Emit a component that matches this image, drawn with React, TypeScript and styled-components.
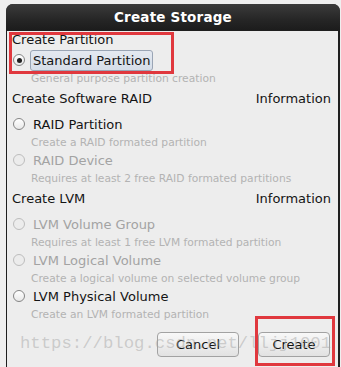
import React from 'react';
import styled, { createGlobalStyle } from 'styled-components';

const Global = createGlobalStyle`
  html, body {
    margin: 0;
    padding: 0;
    background: #efefef;
    overflow: hidden;
  }
  body {
    font-family: 'DejaVu Sans', 'Liberation Sans', sans-serif;
  }
`

const Page = styled.div`
  position: relative;
  width: 341px;
  height: 367px;
  overflow: hidden;
`

const Dialog = styled.div`
  margin: 4px 0 0 6px;
  width: 334px;
  height: 370px;
  display: flex;
  flex-direction: column;
  border-radius: 7px 7px 0 0;
  background: #1f1f1f;
  overflow: hidden;
`

const TitleBar = styled.div`
  height: 26px;
  display: flex;
  align-items: center;
  justify-content: center;
  background: linear-gradient(#3b3b3b, #262626 60%, #1c1c1c);
  color: #ffffff;
  font-weight: 700;
  font-size: 13.5px;
  letter-spacing: 0.2px;
`

const Body = styled.div`
  flex: 1;
  margin: 1px 2px 0 1px;
  background: #ededed;
  padding: 0 7px 0 5px;
  display: flex;
  flex-direction: column;
`

const Heading = styled.div<{ $top: number; $gap: number }>`
  height: 18px;
  line-height: 18px;
  margin-top: ${p => p.$top}px;
  margin-bottom: ${p => p.$gap}px;
  display: flex;
  justify-content: space-between;
  font-size: 13px;
  color: #141414;
`

const Row = styled.div`
  height: 18px;
  display: flex;
  align-items: center;
  padding-left: 1px;
`

const Circle = styled.span<{ $checked?: boolean; $disabled?: boolean }>`
  width: 10px;
  height: 10px;
  border-radius: 50%;
  flex: none;
  border: 1px solid ${p => (p.$disabled ? '#bdbdbd' : '#858585')};
  background: ${p => (p.$disabled ? '#ececec' : 'linear-gradient(#ffffff, #e8e8e8)')};
  display: flex;
  align-items: center;
  justify-content: center;
  &::after {
    content: '';
    width: 5px;
    height: 5px;
    border-radius: 50%;
    background: #202020;
    display: ${p => (p.$checked ? 'block' : 'none')};
  }
`

const Label = styled.span<{ $disabled?: boolean; $focus?: boolean }>`
  margin-left: ${p => (p.$focus ? '5px' : '8px')};
  font-size: 13px;
  color: ${p => (p.$disabled ? '#a3a3a3' : '#141414')};
  ${p =>
    p.$focus &&
    `
    padding: 0 2px 0 2px;
    height: 19px;
    line-height: 19px;
    border: 1px solid #9aa5b5;
    border-radius: 3px;
    background: linear-gradient(#e4e9f1, #d6dde8);
  `}
`

const Desc = styled.div`
  height: 18px;
  line-height: 20px;
  padding-left: 19px;
  font-size: 10.7px;
  color: #b3b3b3;
  white-space: nowrap;
`

const Buttons = styled.div`
  margin-top: 9px;
  display: flex;
  justify-content: flex-end;
  gap: 19px;
  padding-right: 1px;
`

const Button = styled.button<{ $w: number }>`
  width: ${p => p.$w}px;
  height: 25px;
  font-family: 'DejaVu Sans', sans-serif;
  font-size: 13px;
  color: #141414;
  border: 1px solid #a2a2a2;
  border-radius: 4px;
  background: linear-gradient(#f8f8f8, #e2e2e2);
  padding: 0;
`

const Watermark = styled.div`
  position: absolute;
  left: 20px;
  top: 334px;
  font-family: 'Liberation Mono', monospace;
  font-size: 17.3px;
  color: rgba(160, 160, 160, 0.45);
  pointer-events: none;
  white-space: nowrap;
`

const Mark = styled.div<{ $x: number; $y: number; $w: number; $h: number }>`
  position: absolute;
  left: ${p => p.$x}px;
  top: ${p => p.$y}px;
  width: ${p => p.$w}px;
  height: ${p => p.$h}px;
  border: 3px solid #e0383e;
  box-sizing: border-box;
  pointer-events: none;
`

type Option = { label: string; desc: string; disabled?: boolean; checked?: boolean; focus?: boolean }

const Item = ({ label, desc, disabled, checked, focus }: Option) => (
  <>
    <Row>
      <Circle $checked={checked} $disabled={disabled} />
      <Label $disabled={disabled} $focus={focus}>{label}</Label>
    </Row>
    <Desc>{desc}</Desc>
  </>
)

export default function App() {
  return (
    <Page>
      <Global />
      <Dialog>
        <TitleBar>Create Storage</TitleBar>
        <Body>
          <Heading $top={0} $gap={2}>Create Partition</Heading>
          <Item label="Standard Partition" desc="General purpose partition creation" checked focus />

          <Heading $top={3} $gap={7}>
            <span>Create Software RAID</span>
            <span>Information</span>
          </Heading>
          <Item label="RAID Partition" desc="Create a RAID formated partition" />
          <Item label="RAID Device" desc="Requires at least 2 free RAID formated partitions" disabled />

          <Heading $top={3} $gap={7}>
            <span>Create LVM</span>
            <span>Information</span>
          </Heading>
          <Item label="LVM Volume Group" desc="Requires at least 1 free LVM formated partition" disabled />
          <Item label="LVM Logical Volume" desc="Create a logical volume on selected volume group" disabled />
          <Item label="LVM Physical Volume" desc="Create an LVM formated partition" />

          <Buttons>
            <Button $w={82}>Cancel</Button>
            <Button $w={72}>Create</Button>
          </Buttons>
        </Body>
      </Dialog>
      <Watermark>https://blog.csdn.net/lljj1001</Watermark>
      <Mark $x={9} $y={32} $w={165} $h={42} />
      <Mark $x={255} $y={316} $w={80} $h={50} />
    </Page>
  )
}
